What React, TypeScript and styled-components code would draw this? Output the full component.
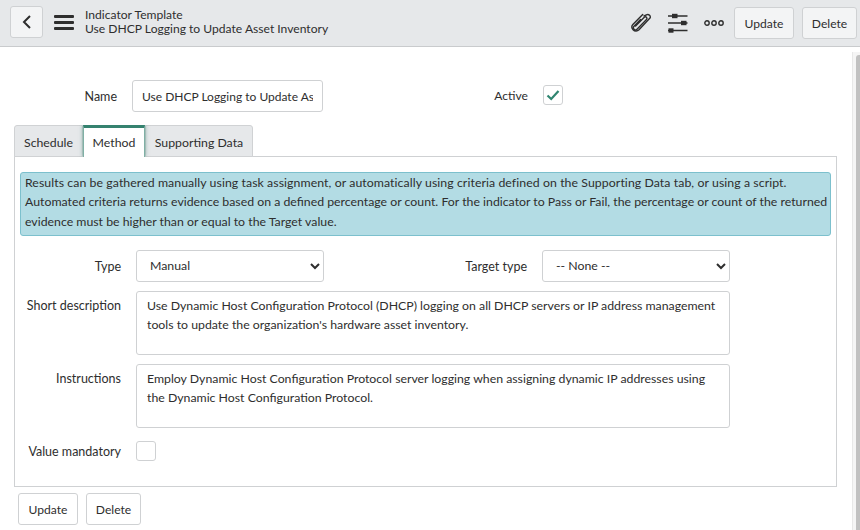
import React from "react";
import styled, { createGlobalStyle } from "styled-components";

const Global = createGlobalStyle`
  html, body { margin: 0; padding: 0; background: #fff; height: 100%; overflow: hidden; }
  * { box-sizing: border-box; }
  body { font-family: "Lato", "Open Sans", sans-serif; font-size: 12.5px; color: #2e2e2e; }
`;
const Page = styled.div`position: relative; width: 860px; height: 530px; display: flex; flex-direction: column; overflow: hidden; background: #fff;`;
const Header = styled.header`height: 47px; flex: none; background: #e6e8ea; border-bottom: 1px solid #c9cbcd; display: flex; align-items: center; padding: 0 3px 0 10px;`;
const BackButton = styled.button`width: 33px; height: 32px; margin-top: -2px; background: #f3f4f5; border: 1px solid #cfd1d3; border-radius: 3px; display: flex; align-items: center; justify-content: center; padding: 0;`;
const Menu = styled.div`margin-left: 11px; width: 20px; display: flex; flex-direction: column; gap: 3px; margin-top: -1px; span { height: 3px; border-radius: 1px; background: #2e2e2e; }`;
const Titles = styled.div`margin-left: 11px; padding-bottom: 2px; font-size: 12.1px; line-height: 14px; color: #2e2e2e; flex: 1;`;
const Tools = styled.div`display: flex; align-items: center;`;
const ToolGap = styled.span<{ $w: number }>`width: ${(p) => p.$w}px; flex: none;`;
const Btn = styled.button<{ $flat?: boolean }>`
  height: 32px; padding: 0; font: 12.1px "Lato", sans-serif; color: #2e2e2e;
  background: ${(p) => (p.$flat ? "#fff" : "#f3f4f5")};
  border: 1px solid #cfd1d3; border-radius: 3px;
`;
const UpdateBtn = styled(Btn)`width: 60px;`;
const DeleteBtn = styled(Btn)`width: 55px;`;
const Icon = styled.svg`display: block;`;
const Body = styled.main`flex: 1; padding: 33px 23px 0 14px;`;
const TopRow = styled.div`display: flex; align-items: center; height: 32px;`;
const Label = styled.label<{ $w: number }>`width: ${(p) => p.$w}px; flex: none; text-align: right; padding-right: 15px; font-size: 12.5px;`;
const ActiveLabel = styled(Label)`font-size: 12.1px; padding-bottom: 2px;`;
const Input = styled.input`width: 191px; height: 32px; padding: 0 9px; border: 1px solid #cfd1d3; border-radius: 3px; font: 12px "Lato", sans-serif; color: #2e2e2e;`;
const Check = styled.span`width: 20px; height: 20px; border: 1px solid #cfd1d3; border-radius: 3px; display: flex; align-items: center; justify-content: center; background: #fff;`;
const ActiveCheck = styled(Check)`margin-bottom: 2px;`;
const Tabs = styled.div`margin-top: 13px; display: grid; grid-template-columns: 69px 62px 108px; width: 239px; height: 32px; position: relative; z-index: 1;`;
const Tab = styled.div<{ $active?: boolean }>`
  height: 32px; padding-top: ${(p) => (p.$active ? "3px" : "5px")}; line-height: 24px; font-size: 12.3px; text-align: center;
  background: ${(p) => (p.$active ? "#fff" : "#e6e8ea")};
  border-top: ${(p) => (p.$active ? "3px solid #35826f" : "1px solid #d0d2d4")};
  border-left: ${(p) => (p.$active ? "1px solid #7fb0a5" : "1px solid #d0d2d4")};
  border-right: ${(p) => (p.$active ? "1px solid #7fb0a5" : "1px solid #d0d2d4")};
  border-bottom: ${(p) => (p.$active ? "none" : "1px solid #d0d2d4")};
  ${(p) => (p.$active ? "position: relative; z-index: 2; box-shadow: 0 0 4px rgba(53,130,111,.65); clip-path: inset(0 -6px 0 -6px);" : "")}
  &:first-child { border-top-left-radius: 3px; }
  &:last-child { border-top-right-radius: 3px; }
`;
const Panel = styled.section`margin-top: -1px; height: 331px; border: 1px solid #cfd1d3; padding: 15px 5px 0; display: flex; flex-direction: column;`;
const Info = styled.div`height: 64px; background: #b3dce4; border: 1px solid #7cc0cd; border-radius: 3px; padding: 0 4px; font-size: 12.3px; line-height: 19.3px; white-space: nowrap;`;
const InfoLine = styled.div<{ $spread?: number }>`letter-spacing: ${(p) => p.$spread ?? 0}px;`;
const Row = styled.div`display: flex; align-items: center; margin-top: 14px;`;
const LastRow = styled(Row)`margin-top: 13px;`;
const Select = styled.select<{ $w: number }>`width: ${(p) => p.$w}px; height: 32px; padding: 0 9px 1px; border: 1px solid #cfd1d3; border-radius: 3px; background: #fff; font: 12.3px "Lato", sans-serif; color: #2e2e2e;`;
const AreaRow = styled.div`display: flex; align-items: flex-start; margin-top: 9px;`;
const AreaLabel = styled(Label)`padding-top: 7px;`;
const Area = styled.div`width: 594px; height: 64px; padding: 5px 10px; border: 1px solid #cfd1d3; border-radius: 3px; font-size: 12.3px; line-height: 18.5px; white-space: nowrap;`;
const BottomActions = styled.div`display: flex; gap: 8px; padding: 6px 0 0 4px;`;
const ScrollTrack = styled.div`position: absolute; top: 52px; right: 0; bottom: 0; width: 8px; background: #f5f5f5; border-left: 1px solid #e8e8e8;`;
const ScrollThumb = styled.div`position: absolute; top: 3px; right: 0; bottom: 0; width: 4px; background: #c1c1c1; border-top-left-radius: 3px;`;

const Sliders = () => (
  <Icon width="20" height="20" viewBox="0 0 20 20" fill="none" stroke="#2e2e2e" strokeWidth="1.4">
    <path d="M0 3h19.5M0 10h19.5M0 17.5h19.5" />
    <rect x="4" y="0.8" width="5.5" height="4.4" fill="#2e2e2e" stroke="none" />
    <rect x="13" y="7.8" width="5.5" height="4.4" fill="#2e2e2e" stroke="none" />
    <rect x="0.5" y="15.3" width="5" height="4.4" fill="#2e2e2e" stroke="none" />
  </Icon>
);
const Clip = () => (
  <Icon width="21" height="20" viewBox="0 0 21 20" fill="none" stroke="#2e2e2e" strokeWidth="1.4" strokeLinecap="round" strokeLinejoin="round">
    <path d="M9.5 6.5L3 13.2a2.1 2.1 0 0 0 3 3L15.5 6.4a1.5 1.5 0 0 0-2.2-2.1L4.6 13" />
    <path d="M13 3L16 1.6a2.6 2.6 0 0 1 3.2 3.2L8 16.8a4.1 4.1 0 0 1-5.9-.1 3.9 3.9 0 0 1 0-5.4L11.7 1.6" />
  </Icon>
);
const Dots = () => (
  <Icon width="20" height="6" viewBox="0 0 20 6" fill="none" stroke="#2e2e2e" strokeWidth="1.4">
    <circle cx="3" cy="3" r="2.2" /><circle cx="10" cy="3" r="2.2" /><circle cx="17" cy="3" r="2.2" />
  </Icon>
);
const Tick = () => (
  <Icon width="14" height="12" viewBox="0 0 14 12" fill="none" stroke="#2f8570" strokeWidth="2.2"><path d="M1.5 6.5l3.7 3.5L12.5 2" /></Icon>
);

export default function App() {
  return (
    <Page>
      <Global />
      <Header>
        <BackButton aria-label="Back">
          <Icon width="10" height="14" viewBox="0 0 10 14" fill="none" stroke="#2e2e2e" strokeWidth="2"><path d="M8 1L2 7l6 6" /></Icon>
        </BackButton>
        <Menu><span /><span /><span /></Menu>
        <Titles><div>Indicator Template</div><div>Use DHCP Logging to Update Asset Inventory</div></Titles>
        <Tools>
          <Clip />
          <ToolGap $w={16} />
          <Sliders />
          <ToolGap $w={16} />
          <Dots />
          <ToolGap $w={10} />
          <UpdateBtn>Update</UpdateBtn>
          <ToolGap $w={8} />
          <DeleteBtn>Delete</DeleteBtn>
        </Tools>
      </Header>
      <Body>
        <TopRow>
          <Label $w={118}>Name</Label>
          <Input readOnly value="Use DHCP Logging to Update Asset Inventory" />
          <ActiveLabel $w={220}>Active</ActiveLabel>
          <ActiveCheck><Tick /></ActiveCheck>
        </TopRow>
        <Tabs>
          <Tab>Schedule</Tab>
          <Tab $active>Method</Tab>
          <Tab>Supporting Data</Tab>
        </Tabs>
        <Panel>
          <Info>
            <InfoLine $spread={0.07}>Results can be gathered manually using task assignment, or automatically using criteria defined on the Supporting Data tab, or using a script.</InfoLine>
            <InfoLine>Automated criteria returns evidence based on a defined percentage or count. For the indicator to Pass or Fail, the percentage or count of the returned</InfoLine>
            <InfoLine>evidence must be higher than or equal to the Target value.</InfoLine>
          </Info>
          <Row>
            <Label $w={116}>Type</Label>
            <Select $w={188}><option>Manual</option></Select>
            <Label $w={218}>Target type</Label>
            <Select $w={188}><option>-- None --</option></Select>
          </Row>
          <AreaRow>
            <AreaLabel $w={116}>Short description</AreaLabel>
            <Area>Use Dynamic Host Configuration Protocol (DHCP) logging on all DHCP servers or IP address management<br />tools to update the organization's hardware asset inventory.</Area>
          </AreaRow>
          <AreaRow>
            <AreaLabel $w={116}>Instructions</AreaLabel>
            <Area>Employ Dynamic Host Configuration Protocol server logging when assigning dynamic IP addresses using<br />the Dynamic Host Configuration Protocol.</Area>
          </AreaRow>
          <LastRow>
            <Label $w={116}>Value mandatory</Label>
            <Check />
          </LastRow>
        </Panel>
        <BottomActions>
          <UpdateBtn $flat>Update</UpdateBtn>
          <DeleteBtn $flat>Delete</DeleteBtn>
        </BottomActions>
      </Body>
      <ScrollTrack><ScrollThumb /></ScrollTrack>
    </Page>
  );
}
